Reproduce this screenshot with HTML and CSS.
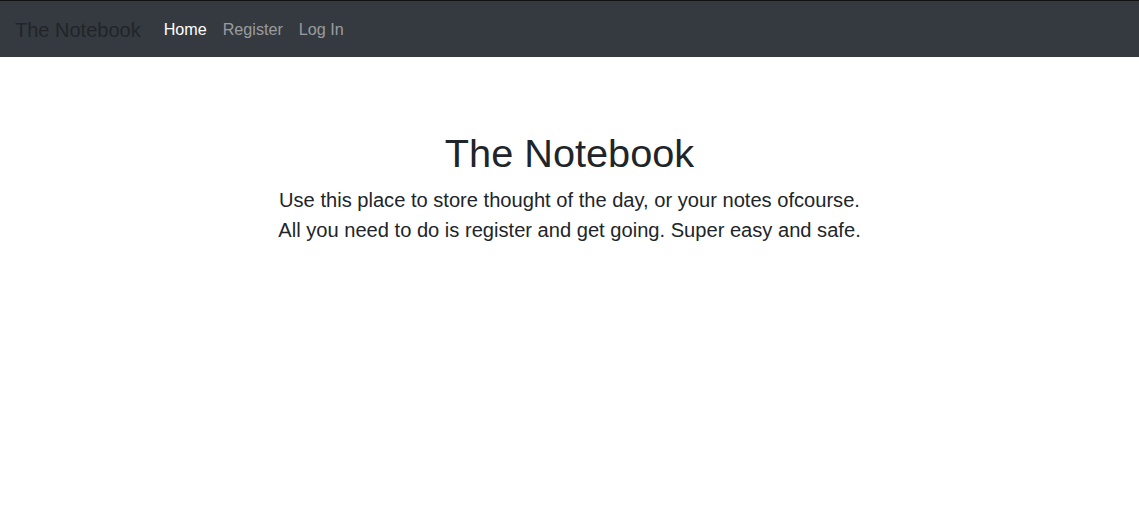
FILE: index.html
```html
<!DOCTYPE html>
<html>
<head>
<meta charset="utf-8">
<link rel="stylesheet" href="styles.css">
</head>
<body>
<nav class="navbar">
  <a class="brand" href="#">The Notebook</a>
  <ul class="nav">
    <li><a class="nav-link active" href="#">Home</a></li>
    <li><a class="nav-link" href="#">Register</a></li>
    <li><a class="nav-link" href="#">Log In</a></li>
  </ul>
</nav>
<main class="hero">
  <h1 class="title">The Notebook</h1>
  <p class="lead">Use this place to store thought of the day, or your notes ofcourse.<br>All you need to do is register and get going. Super easy and safe.</p>
</main>
</body>
</html>
```
FILE: styles.css
```css
* { box-sizing: border-box; }
body {
  margin: 0;
  font-family: "Liberation Sans", Arial, sans-serif;
  font-size: 16px;
  line-height: 1.5;
  color: #212529;
  background: #fff;
}
.navbar {
  display: flex;
  align-items: center;
  background: #343a40;
  border-top: 1px solid #111;
  padding: 9px 15px 7px;
  height: 57px;
}
.brand {
  font-size: 20px;
  line-height: 30px;
  padding: 5px 0;
  margin-right: 15px;
  color: #212529;
  text-decoration: none;
}
.nav {
  display: flex;
  list-style: none;
  margin: 0;
  padding: 0;
}
.nav-link {
  display: block;
  padding: 7px 8px 9px;
  font-size: 16.15px;
  line-height: 24px;
  color: rgba(255,255,255,.5);
  text-decoration: none;
}
.nav-link.active { color: #fff; }
.hero {
  text-align: center;
  padding-top: 72px;
}
.title {
  margin: 0 0 8px;
  font-size: 39.7px;
  font-weight: 500;
  line-height: 48px;
}
.lead {
  margin: 0;
  font-size: 20.12px;
  font-weight: 300;
  line-height: 30px;
}
```
